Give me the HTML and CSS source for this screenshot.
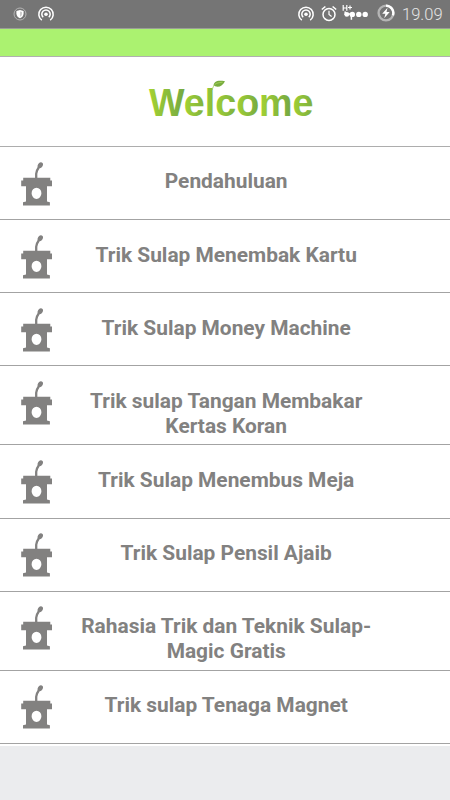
FILE: index.html
```html
<!DOCTYPE html>
<html lang="id">
<head>
    <meta charset="UTF-8">
    <meta name="viewport" content="width=device-width, initial-scale=1.0">
    <title>Trik Sulap</title>
    <link rel="stylesheet" href="styles.css">
</head>
<body>
    <!-- Shared podium icon -->
    <svg class="sprite" width="0" height="0">
        <symbol id="podium" viewBox="0 0 32 46">
            <path d="M15.2 18V12.8C15.2 10.3 15.8 9.2 18 6" fill="none" stroke="#828180" stroke-width="2.3"/>
            <ellipse cx="19.3" cy="4.2" rx="2.4" ry="3.1" transform="rotate(32 19.3 4.2)" fill="#828180"/>
            <path fill="#828180" fill-rule="evenodd" d="M2.2 16.8H29.3V19.5H31V25.2H26V40.5L28.9 41.2V44.6H2V41.2L5 40.5V25.2H0.2V19.5H2.2ZM15.5 26.7A4.9 5.6 0 1 0 15.5 37.9A4.9 5.6 0 1 0 15.5 26.7Z"/>
        </symbol>
    </svg>

    <!-- Status bar -->
    <header class="status-bar">
        <svg class="status-icon shield" width="14" height="14" viewBox="0 0 14 14">
            <circle cx="7" cy="7" r="6" fill="none" stroke="#b4b4b4" stroke-width="1"/>
            <path d="M3.4 4L7 3L10.6 4V6.5C10.6 8.8 9 10.4 7 11.2C5 10.4 3.4 8.8 3.4 6.5Z" fill="#fff"/>
            <path d="M7 4.5L9 5V6.7C9 8.2 8.1 9.2 7 9.8Z" fill="#ccc"/>
        </svg>
        <svg class="status-icon hotspot" width="18" height="17" viewBox="0 0 18 17">
            <path d="M4.8 15.2A7.2 7.2 0 1 1 13.2 15.2M6.2 12.3A4.2 4.2 0 1 1 11.8 12.3" fill="none" stroke="#fff" stroke-width="1.5"/>
            <circle cx="9" cy="9.2" r="1.8" fill="#fff"/>
        </svg>
        <svg class="status-icon hotspot-right" width="18" height="17" viewBox="0 0 18 17">
            <path d="M4.8 15.2A7.2 7.2 0 1 1 13.2 15.2M6.2 12.3A4.2 4.2 0 1 1 11.8 12.3" fill="none" stroke="#fff" stroke-width="1.5"/>
            <circle cx="9" cy="9.2" r="1.8" fill="#fff"/>
        </svg>
        <svg class="status-icon alarm" width="16" height="17" viewBox="0 0 16 17">
            <circle cx="8" cy="9.4" r="6" fill="none" stroke="#fff" stroke-width="1.5"/>
            <path d="M8 5.8V9.5L10.6 11.4" fill="none" stroke="#fff" stroke-width="1.2"/>
            <path d="M0.8 4.5L4.4 1.5M15.2 4.5L11.6 1.5" stroke="#fff" stroke-width="1.6"/>
        </svg>
        <svg class="status-icon signal" width="27" height="18" viewBox="0 0 27 18">
            <path d="M1.2 1V6.8M4.8 1V6.8M1.2 4H4.8M6 3.5H10M8 1.5V5.5" fill="none" stroke="#fff" stroke-width="1.2"/>
            <g fill="#fff">
                <circle cx="4.8" cy="10.4" r="2.4"/>
                <circle cx="10.3" cy="10.4" r="2.7"/>
                <circle cx="16.8" cy="10.4" r="2.7"/>
                <circle cx="23.2" cy="10.4" r="2.7"/>
            </g>
            <path d="M3.2 7.5V11M6 10H9M9.4 11V15.8" stroke="#fff" stroke-width="1.5"/>
        </svg>
        <svg class="status-icon battery" width="18" height="18" viewBox="0 0 18 18">
            <circle cx="9" cy="9" r="7.4" fill="none" stroke="#b5b5b5" stroke-width="2.4"/>
            <path d="M9 1.6A7.4 7.4 0 0 1 15.9 11.4" fill="none" stroke="#fff" stroke-width="2.4"/>
            <path d="M10.5 3.8L5.2 9.8H8.4L7.2 14.2L12.7 8.1H9.5Z" fill="#fff"/>
        </svg>
        <span class="clock">19.09</span>
    </header>

    <div class="green-bar"></div>

    <!-- Welcome logo, each letter fades from light to dark green -->
    <div class="welcome">
        <svg class="logo" width="180" height="60" viewBox="0 0 180 60">
            <defs>
                <linearGradient id="leafGreen" x1="0" y1="0" x2="180" y2="0" gradientUnits="userSpaceOnUse">
                    <stop offset="0.05" stop-color="#a4d233"/>
                    <stop offset="0.25" stop-color="#74a843"/>
                    <stop offset="0.25" stop-color="#a4d233"/>
                    <stop offset="0.36" stop-color="#7cb040"/>
                    <stop offset="0.36" stop-color="#a0cf34"/>
                    <stop offset="0.41" stop-color="#84b83c"/>
                    <stop offset="0.41" stop-color="#a4d233"/>
                    <stop offset="0.533" stop-color="#7cb040"/>
                    <stop offset="0.533" stop-color="#a4d233"/>
                    <stop offset="0.665" stop-color="#74a843"/>
                    <stop offset="0.665" stop-color="#a4d233"/>
                    <stop offset="0.84" stop-color="#74a843"/>
                    <stop offset="0.84" stop-color="#a4d233"/>
                    <stop offset="0.97" stop-color="#78ac42"/>
                </linearGradient>
            </defs>
            <text class="logo-text" x="9" y="45.5" textLength="164.5" lengthAdjust="spacingAndGlyphs" fill="url(#leafGreen)">Welcome</text>
            <path d="M73.5 15.5C74 11.5 77 9.8 85 11.2C83 15.5 79 17.8 75.2 16.3Z" fill="#78ac3e"/>
            <path d="M72.3 20C72.5 17.5 74 15 76 13.5C78 12.8 80 12.5 82.5 12.2" fill="none" stroke="#a5cf5b" stroke-width="0.9"/>
        </svg>
    </div>

    <!-- Menu -->
    <ul class="menu">
        <li class="menu-item"><svg class="podium"><use href="#podium"/></svg><span class="title">Pendahuluan</span></li>
        <li class="menu-item"><svg class="podium"><use href="#podium"/></svg><span class="title">Trik Sulap Menembak Kartu</span></li>
        <li class="menu-item"><svg class="podium"><use href="#podium"/></svg><span class="title">Trik Sulap Money Machine</span></li>
        <li class="menu-item tall"><svg class="podium"><use href="#podium"/></svg><span class="title">Trik sulap Tangan Membakar<br>Kertas Koran</span></li>
        <li class="menu-item"><svg class="podium"><use href="#podium"/></svg><span class="title">Trik Sulap Menembus Meja</span></li>
        <li class="menu-item"><svg class="podium"><use href="#podium"/></svg><span class="title">Trik Sulap Pensil Ajaib</span></li>
        <li class="menu-item tall"><svg class="podium"><use href="#podium"/></svg><span class="title">Rahasia Trik dan Teknik Sulap-<br>Magic Gratis</span></li>
        <li class="menu-item"><svg class="podium"><use href="#podium"/></svg><span class="title">Trik sulap Tenaga Magnet</span></li>
    </ul>
</body>
</html>
```
FILE: styles.css
```css
* {
    margin: 0;
    padding: 0;
    box-sizing: border-box;
}

body {
    width: 450px;
    height: 800px;
    overflow: hidden;
    background-color: #ebecee;
    font-family: Roboto, sans-serif;
}

.sprite {
    display: block;
}

/* Status bar */
.status-bar {
    display: flex;
    align-items: flex-start;
    height: 29px;
    background-color: #757575;
    border-bottom: 1px solid #9a9f96;
}

.status-icon {
    flex: none;
}

.shield {
    margin: 7px 0 0 13px;
}

.hotspot {
    margin: 5px 0 0 10px;
}

.hotspot-right {
    margin: 5px 0 0 auto;
}

.alarm {
    margin: 5px 0 0 6px;
}

.signal {
    margin: 4px 0 0 5px;
}

.battery {
    margin: 4px 0 0 8px;
}

.clock {
    width: 40px;
    margin: 5px 8px 0 7px;
    color: #e6e6e6;
    font-size: 16.5px;
    font-weight: 300;
    line-height: 20px;
    white-space: nowrap;
}

.green-bar {
    height: 28px;
    background-color: #abf270;
    border-bottom: 1px solid #b0b0b0;
}

/* Welcome logo */
.welcome {
    display: flex;
    height: 90px;
    padding: 13px 0 0 140px;
    background-color: #fff;
    border-bottom: 1px solid #adadad;
}

.logo-text {
    font-family: "Liberation Sans", Arial, sans-serif;
    font-size: 38px;
    font-weight: bold;
}

/* Menu */
.menu {
    list-style: none;
    background-color: #fff;
    padding-bottom: 2px;
}

.menu-item {
    display: flex;
    align-items: flex-start;
    height: 73.15px;
    padding: 13.7px 0 0 21px;
    border-bottom: 1px solid #a3a3a3;
}

.menu-item.tall {
    height: 79px;
}

.podium {
    flex: none;
    width: 32px;
    height: 46px;
}

.title {
    width: 310px;
    margin: 8.7px 0 0 18.2px;
    color: #828180;
    font-size: 20.9px;
    font-weight: 700;
    line-height: 25px;
    text-align: center;
    white-space: nowrap;
}
```
